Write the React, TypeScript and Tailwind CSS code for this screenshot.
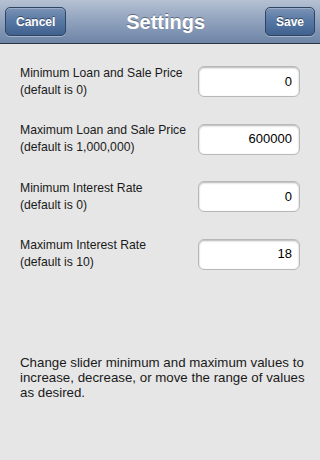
import React from "react";

const rows = [
  { label: "Minimum Loan and Sale Price", hint: "(default is 0)", value: "0" },
  { label: "Maximum Loan and Sale Price", hint: "(default is 1,000,000)", value: "600000" },
  { label: "Minimum Interest Rate", hint: "(default is 0)", value: "0" },
  { label: "Maximum Interest Rate", hint: "(default is 10)", value: "18" },
];

function NavButton({ children }: { children: React.ReactNode }) {
  return (
    <button className="h-[29px] px-[10px] rounded-[5px] border border-[#2f4564] bg-gradient-to-b from-[#7b93b5] via-[#5676a3] to-[#41628f] text-white text-[12px] font-bold [text-shadow:0_-1px_0_rgba(0,0,0,0.45)] shadow-[0_1px_0_rgba(255,255,255,0.35),inset_0_1px_0_rgba(255,255,255,0.25)]">
      {children}
    </button>
  );
}

export default function App() {
  return (
    <div className="w-[320px] h-[460px] flex flex-col bg-[#e6e6e6] font-['Liberation_Sans',Arial,sans-serif] overflow-hidden">
      {/* Nav bar */}
      <div className="h-[44px] shrink-0 flex items-center justify-between px-[5px] bg-gradient-to-b from-[#b6c2d3] via-[#8fa1bd] to-[#6d85a6] border-b border-[#2d3642]">
        <NavButton>Cancel</NavButton>
        <div className="text-white text-[20px] font-bold [text-shadow:0_-1px_0_rgba(0,0,0,0.4)]">Settings</div>
        <NavButton>Save</NavButton>
      </div>

      {/* Fields */}
      <div className="flex flex-col gap-[23.5px] pt-[20.5px] px-[20px]">
        {rows.map((r) => (
          <div key={r.label} className="flex items-center justify-between">
            <div className="text-[12.2px] leading-[17px] text-[#1a1a1a]">
              <div>{r.label}</div>
              <div>{r.hint}</div>
            </div>
            <div className="w-[102px] h-[31px] rounded-[6px] bg-white border border-[#b8b8b8] shadow-[inset_0_1px_2px_rgba(0,0,0,0.3)] flex items-center justify-end pr-[7px] text-[13px] text-black">
              {r.value}
            </div>
          </div>
        ))}
      </div>

      {/* Note */}
      <p className="mt-[84px] pl-[20px] pr-[12px] text-[13.3px] leading-[15px] text-[#1a1a1a]">
        Change slider minimum and maximum values to increase, decrease, or move the range of values as desired.
      </p>
    </div>
  );
}
